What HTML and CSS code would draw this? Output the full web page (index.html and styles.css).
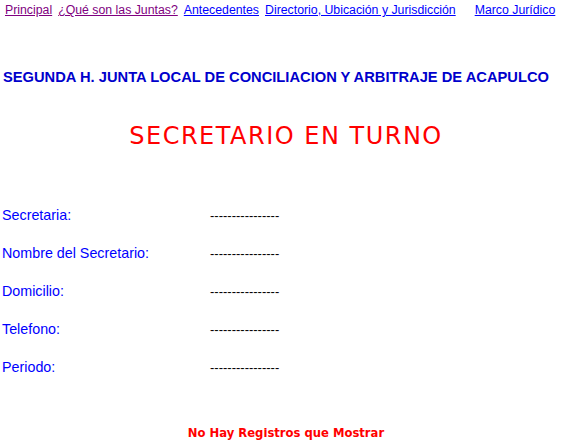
FILE: index.html
```html
<!DOCTYPE html>
<html lang="es">
<head>
<meta charset="utf-8">
<title>Secretario en Turno</title>
<link rel="stylesheet" href="styles.css">
</head>
<body>
<nav class="nav">
  <a class="visited" href="#">Principal</a>
  <a class="visited" href="#">¿Qué son las Juntas?</a>
  <a href="#">Antecedentes</a>
  <a href="#">Directorio, Ubicación y Jurisdicción</a>
  <a class="last" href="#">Marco Jurídico</a>
</nav>
<h1 class="junta">SEGUNDA H. JUNTA LOCAL DE CONCILIACION Y ARBITRAJE DE ACAPULCO</h1>
<h2 class="title">SECRETARIO EN TURNO</h2>
<div class="fields">
  <div class="row"><span class="label">Secretaria:</span><span class="value">----------------</span></div>
  <div class="row"><span class="label">Nombre del Secretario:</span><span class="value">----------------</span></div>
  <div class="row"><span class="label">Domicilio:</span><span class="value">----------------</span></div>
  <div class="row"><span class="label">Telefono:</span><span class="value">----------------</span></div>
  <div class="row"><span class="label">Periodo:</span><span class="value">----------------</span></div>
</div>
<p class="empty">No Hay Registros que Mostrar</p>
</body>
</html>
```

FILE: styles.css
```css
html, body {
  margin: 0;
  padding: 0;
  background: #ffffff;
}
body {
  font-family: "Liberation Sans", Arial, sans-serif;
  width: 572px;
  height: 444px;
  overflow: hidden;
}
.nav {
  display: flex;
  padding: 3px 0 0 5px;
  height: 15px;
  font-size: 12.3px;
  line-height: 15px;
  gap: 6px;
}
.nav a {
  color: #0000ff;
  text-decoration: underline;
}
.nav a.visited {
  color: #800080;
}
.nav a.last {
  margin-left: 13px;
}
.junta {
  margin: 50px 0 0 3px;
  font-size: 14.7px;
  line-height: 18px;
  font-weight: bold;
  color: #0000cc;
}
.title {
  margin: 35px 0 0 0;
  text-align: center;
  font-family: "DejaVu Sans", Verdana, sans-serif;
  font-weight: normal;
  font-size: 24px;
  letter-spacing: 1.5px;
  line-height: 30px;
  color: #ff0000;
}
.fields {
  margin-top: 56px;
  display: flex;
  flex-direction: column;
  gap: 22px;
}
.row {
  display: flex;
  align-items: baseline;
  height: 16px;
  line-height: 16px;
}
.label {
  width: 210px;
  padding-left: 2px;
  box-sizing: border-box;
  font-size: 14.3px;
  color: #0000ff;
}
.value {
  font-size: 13px;
  color: #000000;
}
.empty {
  margin: 51px 0 0 0;
  text-align: center;
  font-family: "DejaVu Sans", Verdana, sans-serif;
  font-weight: bold;
  font-size: 11.6px;
  line-height: 14px;
  color: #ff0000;
}
```
